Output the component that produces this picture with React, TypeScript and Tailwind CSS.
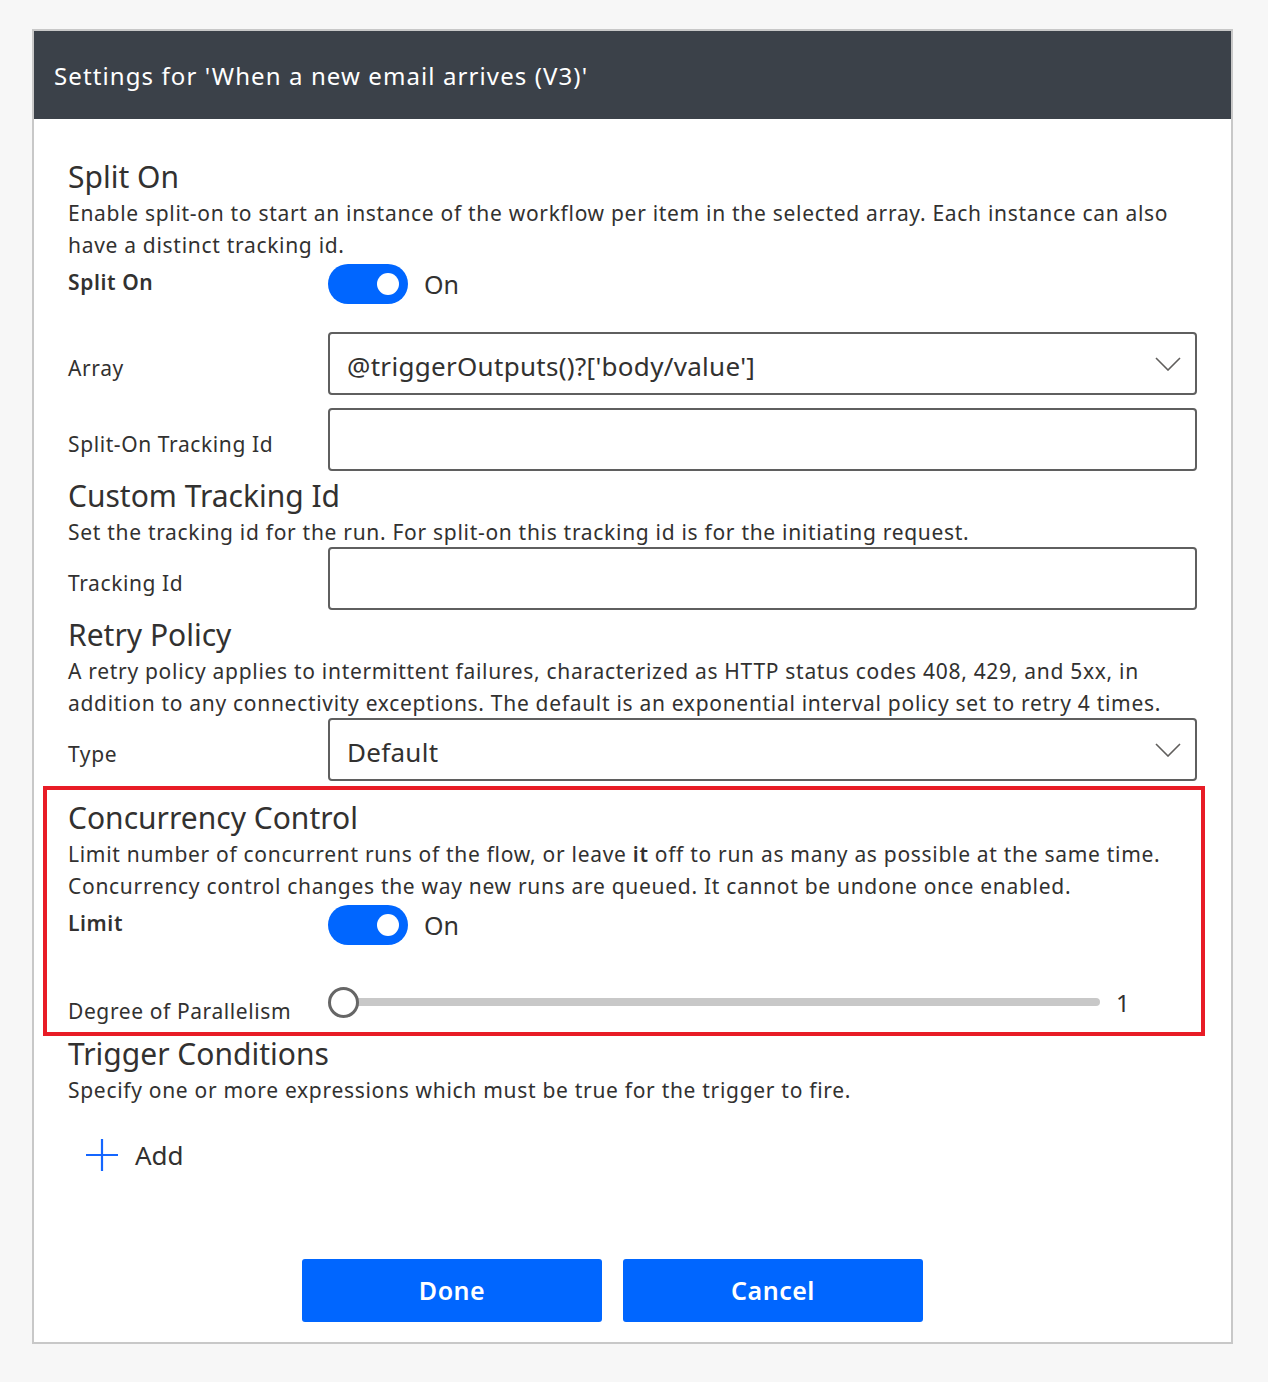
import { ReactNode } from "react";

const Chevron = () => (
  <svg width="26" height="14" viewBox="0 0 26 14" fill="none" className="shrink-0">
    <path d="M1 1 L13 13 L25 1" stroke="#605e5c" strokeWidth="1.6" />
  </svg>
);

const Toggle = () => (
  <div className="flex items-center">
    <div className="w-[80px] h-[40px] rounded-full bg-[#0066ff] flex items-center justify-end pr-[9px]">
      <div className="w-[22px] h-[22px] rounded-full bg-white" />
    </div>
    <span className="ml-4 text-[25px] leading-[40px] text-[#323130]">On</span>
  </div>
);

const Heading = ({ children }: { children: ReactNode }) => (
  <h2 className="text-[30px] leading-[36px] text-[#323130]">{children}</h2>
);

const Desc = ({ children }: { children: ReactNode }) => (
  <p className="mt-[2px] text-[21px] leading-[32px] tracking-[0.7px] text-[#323130]">{children}</p>
);

const FieldRow = ({ label, children, className = "" }: { label: string; children: ReactNode; className?: string }) => (
  <div className={`flex items-start ${className}`}>
    <div className="w-[260px] shrink-0 pt-[22px] text-[21px] leading-[28px] tracking-[0.6px] text-[#323130]">{label}</div>
    <div className="flex-1">{children}</div>
  </div>
);

const Box = ({ value, chevron }: { value?: string; chevron?: boolean }) => (
  <div className="h-[63px] border-2 border-[#5f5f5f] rounded-[4px] flex items-center justify-between pl-[17px] pr-[14px]">
    <span className="text-[26px] text-[#323130] tracking-[0.3px] mt-[6px]">{value}</span>
    {chevron && <Chevron />}
  </div>
);

export default function App() {
  return (
    <div className="min-h-[1382px] bg-[#f7f7f7] pt-[29px] pl-[32px]" style={{ fontFamily: '"Noto Sans", "Open Sans", sans-serif' }}>
      <div className="w-[1201px] border-2 border-[#c8c8c8] bg-white">
        {/* Header */}
        <div className="h-[88px] bg-[#3b4149] flex items-center pl-[20px]">
          <span className="text-[24px] text-white tracking-[1.1px] mt-[2px]">Settings for 'When a new email arrives (V3)'</span>
        </div>

        <div className="px-[34px] pt-[40px] pb-[20px]">
          {/* Split On */}
          <Heading>Split On</Heading>
          <Desc>
            Enable split-on to start an instance of the workflow per item in the selected array. Each instance can also
            <br />
            have a distinct tracking id.
          </Desc>
          <div className="flex items-start mt-[3px]">
            <div className="w-[260px] shrink-0 text-[21px] leading-[36px] tracking-[0.6px] font-semibold text-[#323130]">Split On</div>
            <Toggle />
          </div>
          <FieldRow label="Array" className="mt-[28px]">
            <Box value="@triggerOutputs()?['body/value']" chevron />
          </FieldRow>
          <FieldRow label="Split-On Tracking Id" className="mt-[13px]">
            <Box />
          </FieldRow>

          {/* Custom Tracking Id */}
          <div className="mt-[7px]">
            <Heading>Custom Tracking Id</Heading>
            <Desc>Set the tracking id for the run. For split-on this tracking id is for the initiating request.</Desc>
          </div>
          <FieldRow label="Tracking Id" className="-mt-[1px]">
            <Box />
          </FieldRow>

          {/* Retry Policy */}
          <div className="mt-[7px]">
            <Heading>Retry Policy</Heading>
            <Desc>
              A retry policy applies to intermittent failures, characterized as HTTP status codes 408, 429, and 5xx, in
              <br />
              addition to any connectivity exceptions. The default is an exponential interval policy set to retry 4 times.
            </Desc>
          </div>
          <FieldRow label="Type" className="-mt-[1px]">
            <Box value="Default" chevron />
          </FieldRow>

          {/* Concurrency Control (highlighted) */}
          <div className="mt-[5px] ml-[-25px] mr-[-8px] border-4 border-[#e81c26] pl-[21px] pr-[4px] pt-[10px] pb-[7px]">
            <Heading>Concurrency Control</Heading>
            <Desc>
              Limit number of concurrent runs of the flow, or leave <span className="font-semibold">it</span> off to run as many as possible at the same time.
              <br />
              Concurrency control changes the way new runs are queued. It cannot be undone once enabled.
            </Desc>
            <div className="flex items-start mt-[3px]">
              <div className="w-[260px] shrink-0 text-[21px] leading-[36px] tracking-[0.6px] font-semibold text-[#323130]">Limit</div>
              <Toggle />
            </div>
            <div className="flex items-start mt-[42px]">
              <div className="w-[260px] shrink-0 pt-[10px] text-[21px] leading-[28px] tracking-[0.6px] text-[#323130]">Degree of Parallelism</div>
              <div className="flex items-center h-[30px]">
                <div className="relative w-[772px] h-[30px] flex items-center">
                  <div className="ml-[15px] w-[757px] h-[8px] rounded-full bg-[#c8c8c8]" />
                  <div className="absolute left-0 top-0 w-[31px] h-[31px] rounded-full border-[3px] border-[#666666] bg-white" />
                </div>
                <span className="ml-[16px] text-[24px] text-[#323130] leading-[30px] mt-[2px]">1</span>
              </div>
            </div>
          </div>

          {/* Trigger Conditions */}
          <Heading>Trigger Conditions</Heading>
          <Desc>Specify one or more expressions which must be true for the trigger to fire.</Desc>
          <div className="flex items-center mt-[33px] ml-[18px]">
            <svg width="32" height="32" viewBox="0 0 32 32" fill="none">
              <path d="M16 0 V32 M0 16 H32" stroke="#1466ff" strokeWidth="2.2" />
            </svg>
            <span className="ml-[17px] text-[26px] leading-[32px] text-[#323130]">Add</span>
          </div>

          {/* Buttons */}
          <div className="flex gap-[21px] mt-[88px] ml-[234px]">
            <button className="w-[300px] h-[63px] rounded-[3px] bg-[#0066ff] text-white text-[25px] font-semibold tracking-[0.5px]">Done</button>
            <button className="w-[300px] h-[63px] rounded-[3px] bg-[#0066ff] text-white text-[25px] font-semibold tracking-[0.5px]">Cancel</button>
          </div>
        </div>
      </div>
    </div>
  );
}
